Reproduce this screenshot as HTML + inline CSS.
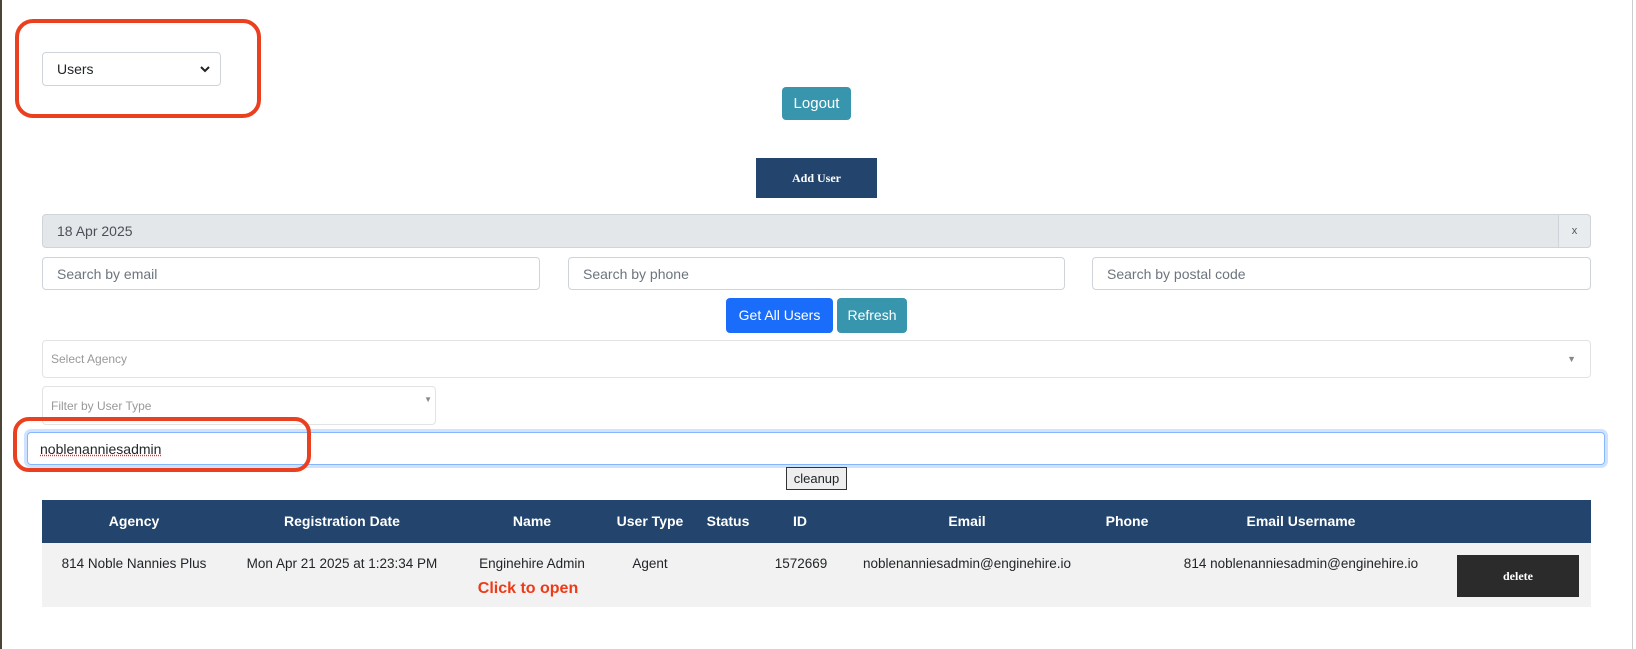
<!DOCTYPE html>
<html><head><meta charset="utf-8"><style>
body{margin:0;width:1636px;height:649px;background:#fff;font-family:"Liberation Sans",sans-serif;position:relative;overflow:hidden;color:#212529}
.a{position:absolute;box-sizing:border-box}
.inp{border:1px solid #ced4da;border-radius:4px;background:#fff;font-size:14px;color:#6c757d;padding-left:14px;display:flex;align-items:center}
.th{position:absolute;top:500px;height:43px;line-height:43px;color:#fff;font-weight:bold;font-size:14px;transform:translateX(-50%);white-space:nowrap}
.td{position:absolute;top:556px;font-size:13.5px;color:#212529;transform:translateX(-50%);white-space:nowrap}
</style></head><body>
<div class="a" style="left:0;top:0;width:2px;height:649px;background:#4a4535"></div>
<div class="a" style="left:1632px;top:0;width:1px;height:649px;background:#ccc"></div>
<div class="a" style="left:15px;top:19px;width:246px;height:99px;border:4px solid #ea4020;border-radius:18px"></div>
<div class="a inp" style="left:42px;top:52px;width:179px;height:34px;color:#212529;font-size:14px">Users<svg style="position:absolute;right:10px;top:13px" width="10" height="7" viewBox="0 0 10 7"><path d="M1 1l4 4 4-4" stroke="#222" stroke-width="2" fill="none"/></svg></div>
<div class="a" style="left:782px;top:87px;width:69px;height:33px;background:#3796ae;border-radius:4px;color:#fff;font-size:15px;text-align:center;line-height:33px">Logout</div>
<div class="a" style="left:756px;top:158px;width:121px;height:40px;background:#23446c;color:#fff;font-family:'Liberation Serif',serif;font-weight:bold;font-size:12px;text-align:center;line-height:40px">Add User</div>
<div class="a inp" style="left:42px;top:214px;width:1549px;height:34px;background:#e4e7ea;color:#495057">18 Apr 2025</div>
<div class="a" style="left:1558px;top:214px;width:33px;height:34px;border:1px solid #ced4da;background:#e9ecef;border-radius:0 4px 4px 0;text-align:center;line-height:32px;font-size:11px;color:#555">x</div>
<div class="a inp" style="left:42px;top:257px;width:498px;height:33px">Search by email</div>
<div class="a inp" style="left:568px;top:257px;width:497px;height:33px">Search by phone</div>
<div class="a inp" style="left:1092px;top:257px;width:499px;height:33px">Search by postal code</div>
<div class="a" style="left:726px;top:298px;width:107px;height:35px;background:#1a6dfb;border-radius:4px;color:#fff;font-size:14px;text-align:center;line-height:35px">Get All Users</div>
<div class="a" style="left:837px;top:298px;width:70px;height:35px;background:#3796ae;border-radius:4px;color:#fff;font-size:14px;text-align:center;line-height:35px">Refresh</div>
<div class="a inp" style="left:42px;top:340px;width:1549px;height:38px;border-color:#e3e3e3;font-size:12px;color:#999;padding-left:8px">Select Agency<span style="position:absolute;right:14px;font-size:9px;color:#888">&#9660;</span></div>
<div class="a inp" style="left:42px;top:386px;width:394px;height:39px;border-color:#e3e3e3;font-size:12px;color:#999;padding-left:8px">Filter by User Type<span style="position:absolute;right:3px;top:8px;font-size:8px;color:#888">&#9660;</span></div>
<div class="a inp" style="left:27px;top:432px;width:1578px;height:33px;border:1px solid #86b7fe;box-shadow:0 0 0 3px #cfe2ff;color:#212529;padding-left:12px"><span style="text-decoration:underline dotted #e03030">noblenanniesadmin</span></div>
<div class="a" style="left:13px;top:417px;width:298px;height:55px;border:4px solid #ea4020;border-radius:16px"></div>
<div class="a" style="left:786px;top:467px;width:61px;height:23px;border:1px solid #333;background:#eee;font-size:13px;text-align:center;line-height:21px">cleanup</div>
<div class="a" style="left:42px;top:500px;width:1549px;height:43px;background:#23446c"></div>
<div class="a" style="left:42px;top:543px;width:1549px;height:64px;background:#f2f2f2"></div>
<div class="th" style="left:134px">Agency</div>
<div class="th" style="left:342px">Registration Date</div>
<div class="th" style="left:532px">Name</div>
<div class="th" style="left:650px">User Type</div>
<div class="th" style="left:728px">Status</div>
<div class="th" style="left:800px">ID</div>
<div class="th" style="left:967px">Email</div>
<div class="th" style="left:1127px">Phone</div>
<div class="th" style="left:1301px">Email Username</div>
<div class="td" style="left:134px">814 Noble Nannies Plus</div>
<div class="td" style="left:342px">Mon Apr 21 2025 at 1:23:34 PM</div>
<div class="td" style="left:532px">Enginehire Admin</div>
<div class="td" style="left:650px">Agent</div>
<div class="td" style="left:801px">1572669</div>
<div class="td" style="left:967px">noblenanniesadmin@enginehire.io</div>
<div class="td" style="left:1301px">814 noblenanniesadmin@enginehire.io</div>
<div class="td" style="left:528px;top:580px;color:#ee3a16;font-weight:bold;font-size:16px">Click to open</div>
<div class="a" style="left:1457px;top:555px;width:122px;height:42px;background:#2b2b2b;color:#fff;font-family:'Liberation Serif',serif;font-weight:bold;font-size:12px;text-align:center;line-height:42px">delete</div>
</body></html>
